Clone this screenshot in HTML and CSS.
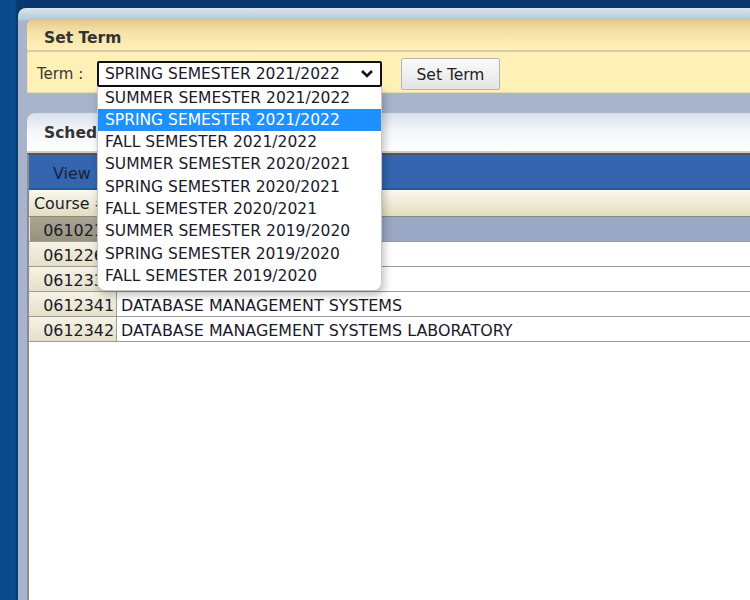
FILE: index.html
```html
<!DOCTYPE html>
<html>
<head>
<meta charset="utf-8">
<link rel="stylesheet" href="styles.css">
</head>
<body>
<div class="frame">
  <div class="setterm">
    <div class="st-head">Set Term</div>
    <div class="st-body">
      <span class="lbl">Term :</span>
      <div class="selwrap">
        <div class="select">
          <span>SPRING SEMESTER 2021/2022</span>
          <svg class="chev" width="14" height="10" viewBox="0 0 14 10"><path d="M2 2 L7 7 L12 2" fill="none" stroke="#111" stroke-width="2.6"/></svg>
        </div>
        <ul class="dropdown">
          <li>SUMMER SEMESTER 2021/2022</li>
          <li class="hl">SPRING SEMESTER 2021/2022</li>
          <li>FALL SEMESTER 2021/2022</li>
          <li>SUMMER SEMESTER 2020/2021</li>
          <li>SPRING SEMESTER 2020/2021</li>
          <li>FALL SEMESTER 2020/2021</li>
          <li>SUMMER SEMESTER 2019/2020</li>
          <li>SPRING SEMESTER 2019/2020</li>
          <li>FALL SEMESTER 2019/2020</li>
        </ul>
      </div>
      <button class="btn">Set Term</button>
    </div>
  </div>
  <div class="sched">
    <div class="tab">Schedule</div>
    <div class="content">
      <div class="bar"><span>View Schedule</span></div>
      <div class="row head"><div class="c1">Course #</div><div class="c2">Course Name</div></div>
      <div class="row sel"><div class="c1">0610211</div><div class="c2">COMPUTER SKILLS</div></div>
      <div class="row"><div class="c1">0612261</div><div class="c2">DATA STRUCTURES</div></div>
      <div class="row"><div class="c1">0612331</div><div class="c2">SYSTEMS ANALYSIS AND DESIGN</div></div>
      <div class="row"><div class="c1">0612341</div><div class="c2">DATABASE MANAGEMENT SYSTEMS</div></div>
      <div class="row"><div class="c1">0612342</div><div class="c2">DATABASE MANAGEMENT SYSTEMS LABORATORY</div></div>
    </div>
  </div>
</div>
</body>
</html>
```
FILE: styles.css
```css
* { box-sizing: border-box; }
html, body { margin: 0; padding: 0; }
body {
  width: 750px; height: 600px; overflow: hidden;
  background: linear-gradient(to right, #0c4a8e 0, #0c4a8e 15px, #083870 17px);
  font-family: "DejaVu Sans", Verdana, sans-serif;
  font-size: 15.5px;
  color: #1a1a2a;
  padding: 8px 0 0 18px;
}
.frame {
  height: 592px;
  border-top-left-radius: 8px;
  background: linear-gradient(to bottom, #dbe6ec 0, #b3c8d6 12px, #a8b4cc 13px, #a8b4cc 100%);
  padding: 12px 0 0 9px;
  display: flex; flex-direction: column;
}
.setterm {
  border-top-left-radius: 6px;
  background: #fff0b8;
  border-bottom: 1px solid #e8dca8;
}
.st-head {
  height: 32px;
  background: linear-gradient(to bottom, #e4ca8c 0, #f6e2a8 12px, #fff0b8 100%);
  border-top-left-radius: 6px;
  border-bottom: 2px solid #d6ccaa;
  font-weight: bold;
  color: #333;
  padding-left: 17px;
  line-height: 36px;
}
.st-body {
  height: 40px;
  display: flex; align-items: center;
  padding: 3px 0 0 9px;
  border-left: 1px solid #f0e4b0;
}
.lbl { color: #3a3a3a; width: 60px; font-size: 15px; }
.selwrap { position: relative; }
.select {
  width: 285px; height: 26px;
  border: 2px solid #111;
  border-radius: 2px;
  background: #fff;
  display: flex; align-items: center; justify-content: space-between;
  padding: 1px 6px 0 6px;
}
.chev { margin-right: 0; }
.dropdown {
  position: absolute; top: 26px; left: 0;
  width: 285px;
  margin: 0; padding: 0 0 3px 0;
  list-style: none;
  background: #fff;
  border: 1px solid #c8c8c8;
  border-top: none;
  border-radius: 0 0 8px 8px;
  box-shadow: 2px 4px 8px rgba(0,0,0,0.25);
  z-index: 5;
}
.dropdown li {
  height: 22.3px; line-height: 23px;
  padding-left: 7px;
  white-space: nowrap;
}
.dropdown li.hl { background: #1e90ff; color: #fff; }
.btn {
  margin-left: 19px;
  width: 99px; height: 32px;
  border: 1px solid #b4b4b4;
  border-radius: 2px;
  background: linear-gradient(to bottom, #fbfbfb, #e4e4e4);
  font-family: inherit; font-size: 15.5px; color: #222;
  padding: 2px 0 0 0;
}
.sched {
  margin-top: 20px;
  flex: 1;
  display: flex; flex-direction: column;
}
.tab {
  height: 40px;
  border-top-left-radius: 8px;
  background: linear-gradient(to bottom, #d8e0ec 0, #f4f6fa 18px, #fff 100%);
  border-bottom: 2px solid #d0d0d0;
  font-weight: bold; color: #333;
  padding-left: 17px;
  line-height: 41px;
}
.content {
  flex: 1;
  background: #fff;
  border-left: 2px solid #8c8c8c;
  border-top: 2px solid #555;
  font-size: 15.9px;
}
.bar {
  height: 35px;
  background: #3465ae;
  border-bottom: 2px solid #2457a4;
  padding-left: 24px;
  line-height: 37px;
  color: #16233d;
}
.row {
  display: flex;
  height: 25px;
  border-bottom: 1px solid #9a9a9a;
  line-height: 27px;
}
.row .c1 {
  width: 88px;
  text-align: right;
  padding-right: 2px;
  background: linear-gradient(to bottom, #f6f3e6, #e4dfc8);
  border-right: 1px solid #a0a0a0;
  border-left: 1px solid #e8e8e8;
}
.row .c2 { flex: 1; padding-left: 4px; background: #fff; white-space: nowrap; }
.row.head { height: 27px; border-bottom: 1px solid #8a8a7a; line-height: 28px; }
.row.head .c1 { text-align: left; padding-left: 4px; border-right: none; background: linear-gradient(to bottom, #fbf8ee, #e2ddc0); }
.row.head .c2 { background: linear-gradient(to bottom, #fbf8ee, #e2ddc0); }
.row.sel .c1 { background: linear-gradient(to bottom, #aaa694, #97927e); }
.row.sel .c2 { background: #9ba8c6; }
```
